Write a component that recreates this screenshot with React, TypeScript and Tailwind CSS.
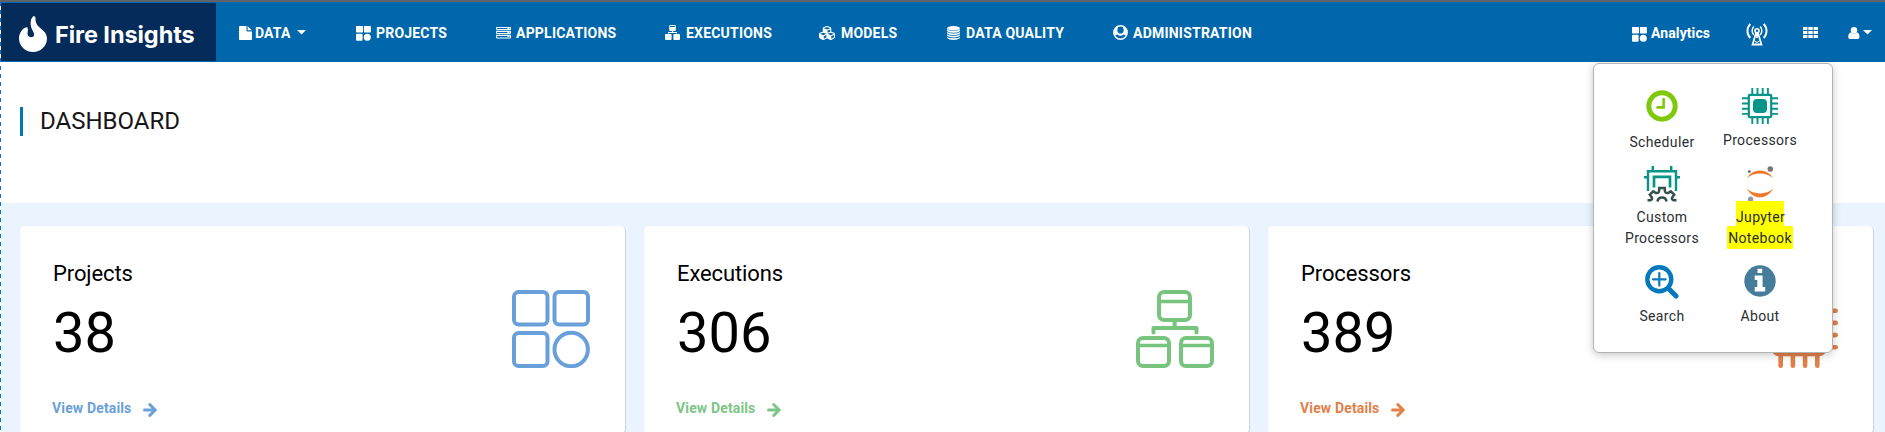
import type { ReactNode } from "react";
import { FaCubes } from "react-icons/fa";

function TilesSolid({ className }: { className: string }) {
  return (
    <svg viewBox="0 0 15 15" fill="currentColor" className={className}>
      <rect x="0" y="0" width="7" height="6.6" rx="0.8" />
      <rect x="7.9" y="0" width="7" height="6.6" rx="0.8" />
      <rect x="0" y="7.8" width="6.6" height="7" rx="1" />
      <circle cx="11.3" cy="11.2" r="3.5" />
    </svg>
  );
}

function FileIcon() {
  return (
    <svg viewBox="0 0 13 14" className="h-[14px] w-[13px]" fill="currentColor">
      <path d="M.9 0H7.5V4.6a.9.9 0 0 0 .9.9H13V13.1a.9.9 0 0 1-.9.9H.9A.9.9 0 0 1 0 13.100V.9A.9.9 0 0 1 .9 0Z" />
      <path d="M8.600 .1 12.800 4.300H8.600Z" />
    </svg>
  );
}

function ServerIcon() {
  return (
    <svg viewBox="0 0 15 12" className="h-[12px] w-[15px]">
      <g fill="none" stroke="currentColor" strokeWidth="1">
        <path d="M.5 .5H14.500V2.500H.5ZM.5 4.500H14.500V6.500H.5ZM.5 8.500H14.500V11H.5Z" />
        <path d="M0 3.500H15M0 7.500H15" opacity=".25" />
        <path d="M11.500 1.500h2M11.500 5.500h2M11.500 9.700h2" />
      </g>
    </svg>
  );
}

function HierarchySolid() {
  return (
    <svg viewBox="0 0 15 15" className="h-[15px] w-[15px]" fill="currentColor">
      <path d="M4.200 1a1 1 0 0 1 1-1h4.600a1 1 0 0 1 1 1v4a1 1 0 0 1-1 1H5.200a1 1 0 0 1-1-1ZM5 1.100v.8h5v-.8Z" fillRule="evenodd" />
      <path d="M7 6h1v1h4v1.500h-1V8H4v.5H3V7h4Z" />
      <path d="M0 10a1 1 0 0 1 1-1h4.600a1 1 0 0 1 1 1v4a1 1 0 0 1-1 1H1a1 1 0 0 1-1-1ZM8.400 10a1 1 0 0 1 1-1H14a1 1 0 0 1 1 1v4a1 1 0 0 1-1 1H9.400a1 1 0 0 1-1-1Z" />
    </svg>
  );
}

function DatabaseIcon() {
  return (
    <svg viewBox="0 0 13 14" className="h-[14px] w-[13px]" fill="currentColor">
      <ellipse cx="6.500" cy="2.200" rx="6.500" ry="2.200" />
      <path d="M0 3.300Q2 5 6.500 5T13 3.300V4.900Q11 6.800 6.500 6.800T0 4.900ZM0 6Q2 7.500 6.500 7.500T13 6V7.400Q11 9.200 6.500 9.200T0 7.400ZM0 8.500Q2 9.900 6.500 9.900T13 8.500V9.800Q11 11.600 6.500 11.600T0 9.800ZM0 10.900Q2 12.300 6.500 12.300T13 10.900V12Q11 14 6.500 14T0 12Z" />
    </svg>
  );
}

function AccountIcon() {
  return (
    <svg viewBox="0 0 15 15" className="h-[15px] w-[15px]">
      <circle cx="7.500" cy="7.500" r="6.700" fill="none" stroke="currentColor" strokeWidth="1.500" />
      <path fill="currentColor" d="M2.500 3.200 5 1.500 4.300 5.500Q4.500 8.600 7.500 8.600T10.700 5.500L10 1.500 12.500 3.200 14 7 13 10.800Q12.300 9.800 10.500 9.500Q9.500 10.800 7.500 10.800T4.500 9.500Q2.700 9.800 2 10.800L1 7Z" />
    </svg>
  );
}

function Caret() {
  return (
    <svg viewBox="0 0 9 5" className="h-[5px] w-[9px]" fill="currentColor">
      <path d="M0 0H9L4.500 4.500Z" />
    </svg>
  );
}

function NavItem({ width, icon, iconWidth, label, tracking }: { width: string; icon: ReactNode; iconWidth: string; label: string; tracking: string }) {
  return (
    <a className={"flex h-full shrink-0 items-center " + width}>
      <span className={"flex shrink-0 items-center " + iconWidth}>{icon}</span>
      <span className={"whitespace-nowrap " + tracking}>{label}</span>
    </a>
  );
}

function Navbar() {
  return (
    <header className="flex h-[60px] items-center bg-[#0067ac] text-sm font-bold leading-5 text-white">
      <div className="ml-px flex h-[58px] w-[215px] shrink-0 items-center bg-[#042b5a] pl-[18px]">
        <svg viewBox="0 0 28 36" className="mt-1 h-9 w-7" fill="#fff">
          <path d="M14.600 0C11.500 2.500 11.300 6.500 12 10.500C12.700 14 15.500 16.500 15.100 19.300C14.600 22 9.300 22 8.600 18.800C8.100 16 9.800 13.500 8.300 11.200C3.500 11.500 0 17 0 22.500C0 30 6.200 36 14 36C21.800 36 28 30 28 22.500C28 12.500 15.500 13 16.500 1.500Q16 .2 14.600 0Z" />
        </svg>
        <span className="ml-[8px] mt-[5px] whitespace-nowrap font-[Inter] text-[23.500px] font-bold leading-8 tracking-[-0.070px]">Fire Insights</span>
      </div>
      <nav className="flex h-full items-center pl-[23px] pt-px">
        <a className="flex w-[117px] shrink-0 items-center">
          <span className="w-[16px]"><FileIcon /></span>
          <span className="tracking-[0.15px]">DATA</span>
          <span className="mb-px ml-[7px]"><Caret /></span>
        </a>
        <NavItem width="w-[140px]" iconWidth="w-[20px]" icon={<TilesSolid className="mt-px h-[15px] w-[15px]" />} label="PROJECTS" tracking="tracking-[0.2px]" />
        <NavItem width="w-[169px]" iconWidth="w-[20px]" icon={<ServerIcon />} label="APPLICATIONS" tracking="tracking-[0.220px]" />
        <NavItem width="w-[153px]" iconWidth="w-[21px]" icon={<HierarchySolid />} label="EXECUTIONS" tracking="tracking-[0.2px]" />
        <NavItem width="w-[129px]" iconWidth="w-[23px]" icon={<FaCubes className="h-[16px] w-[18px]" />} label="MODELS" tracking="tracking-[0.2px]" />
        <NavItem width="w-[166px]" iconWidth="w-[19px]" icon={<DatabaseIcon />} label="DATA QUALITY" tracking="tracking-[0.220px]" />
        <NavItem width="w-[140px]" iconWidth="w-[20px]" icon={<AccountIcon />} label="ADMINISTRATION" tracking="tracking-[0.220px]" />
      </nav>
      <div className="ml-auto flex h-full items-center pr-[13px] pt-px">
        <TilesSolid className="mt-[3px] h-[15px] w-[15px]" />
        <span className="ml-1 w-[60px] whitespace-nowrap tracking-[0.1px]">Analytics</span>
        <svg viewBox="0 0 22 23" className="ml-[35px] mt-[3px] h-[23px] w-[22px]" fill="none" stroke="currentColor">
          <path d="M4.300 1A10 10 0 0 0 4.300 15M17.700 1A10 10 0 0 1 17.700 15" strokeWidth="1.900" />
          <path d="M7.800 3.500A6.500 6.500 0 0 0 7.800 12M14.200 3.500A6.500 6.500 0 0 1 14.200 12" strokeWidth="1.600" />
          <circle cx="11" cy="7.700" r="2" strokeWidth="1.600" />
          <path d="M10 10 6.500 21.700H15.500L12 10M11 10v5" strokeWidth="1.700" />
          <path d="M8 17.500 13.500 21M14 17.500 8.500 21" strokeWidth=".8" />
        </svg>
        <svg viewBox="0 0 15 11" className="ml-[35px] h-[11px] w-[15px]" fill="currentColor">
          <path d="M0 0H4.400V3H0ZM5.300 0H9.700V3H5.300ZM10.600 0H15V3H10.600ZM0 4H4.400V7H0ZM5.300 4H9.700V7H5.300ZM10.600 4H15V7H10.600ZM0 8H4.400V11H0ZM5.300 8H9.700V11H5.300ZM10.600 8H15V11H10.600Z" />
        </svg>
        <svg viewBox="0 0 12 12" className="ml-[30px] mt-px h-3 w-3" fill="currentColor">
          <ellipse cx="6" cy="3.200" rx="3.200" ry="3.200" />
          <path d="M3 5.300Q.2 6.200 .2 10Q.2 12 2 12H9.700Q11.500 12 11.500 10Q11.500 6.200 9 5.300Q6 7.800 3 5.300Z" />
        </svg>
        <span className="mb-px ml-[3px]"><Caret /></span>
      </div>
    </header>
  );
}

function ProjectsIcon() {
  return (
    <svg viewBox="0 0 78 78" className="h-[78px] w-[78px]" fill="none" stroke="#6aa0da" strokeWidth="4">
      <rect x="2" y="2" width="33.500" height="32.500" rx="4.500" />
      <rect x="42.500" y="2" width="33.500" height="32.500" rx="4.500" />
      <rect x="2" y="43" width="33.500" height="33" rx="4.500" />
      <circle cx="59.200" cy="59.500" r="16.700" />
    </svg>
  );
}

function ExecutionsIcon() {
  return (
    <svg viewBox="0 0 78 78" className="h-[78px] w-[78px]" fill="none" stroke="#78c47f" strokeWidth="4">
      <rect x="23" y="2" width="31" height="28" rx="5" />
      <rect x="2" y="48" width="31" height="28" rx="5" />
      <rect x="45" y="48" width="31" height="28" rx="5" />
      <path d="M23 11.500H54M2 55.500H33M45 55.500H76" strokeWidth="3.300" />
      <path d="M38.700 31V37.500" />
      <path d="M17.500 42.500V38H60.500V42.500" strokeLinecap="round" strokeLinejoin="round" />
    </svg>
  );
}

function ProcessorsIcon() {
  return (
    <svg viewBox="0 0 78 78" className="h-[78px] w-[78px]" fill="none" stroke="#e28048" strokeWidth="4.600">
      <rect x="14" y="14" width="50" height="50" rx="5" />
      <rect x="27" y="27" width="24" height="24" rx="3" />
      <path strokeLinecap="round" d="M20.700 2.300V14M32.900 2.300V14M45.100 2.300V14M57.300 2.300V14M20.700 64V75.700M32.900 64V75.700M45.100 64V75.700M57.300 64V75.700M2.300 20.700H14M2.300 32.900H14M2.300 45.100H14M2.300 57.300H14M64 20.700H75.700M64 32.900H75.700M64 45.100H75.700M64 57.300H75.700" />
    </svg>
  );
}

function StatCard({ title, value, color, icon }: { title: string; value: string; color: string; icon: ReactNode }) {
  return (
    <section className="flex h-[208px] justify-between rounded-[5px] bg-white pl-[32px] pr-[35px] shadow-[1px_1px_1px_rgba(0,0,0,0.14)]">
      <div className="flex flex-col">
        <h2 className="mt-[35px] pl-px text-[22px] font-normal leading-[26px] tracking-[-0.1px] text-black">{title}</h2>
        <p className="mt-[14px] pl-px text-[56px] leading-[64px] text-black">{value}</p>
        <a className={"mt-[33px] flex items-center text-sm font-bold leading-5 tracking-[0.15px] " + color}>
          <span>View Details</span>
          <svg viewBox="0 0 14 14" className="ml-[12px] mt-[3px] h-[14px] w-[14px]" fill="none" stroke="currentColor">
            <path d="M1.500 7H11" strokeWidth="3" strokeLinecap="round" />
            <path d="M6.800 1.600 12.200 7 6.800 12.400" strokeWidth="2.900" strokeLinecap="round" />
          </svg>
        </a>
      </div>
      <div className="mt-16">{icon}</div>
    </section>
  );
}

function ChipIcon() {
  return (
    <svg viewBox="0 0 36 36" className="h-9 w-9 shrink-0" fill="none" stroke="#079489">
      <rect x="6.800" y="6.800" width="22.400" height="22.400" rx="1" strokeWidth="2.200" />
      <rect x="11" y="11" width="14" height="14" rx="4" fill="#079489" stroke="none" />
      <path strokeWidth="1.900" d="M10.300 0V6M15.500 0V6M20.700 0V6M25.900 0V6M10.300 30V36M15.500 30V36M20.700 30V36M25.900 30V36M0 10.300H6M0 15.500H6M0 20.700H6M0 25.900H6M30 10.300H36M30 15.500H36M30 20.700H36M30 25.900H36" />
    </svg>
  );
}

function CustomChipIcon() {
  return (
    <svg viewBox="0 0 36 36" className="h-9 w-9 shrink-0" fill="none" stroke="#079489" strokeWidth="2.400">
      <path d="M4 25V5.200H32V25M0 11.300H4M32 11.300H36M8.800 0V5M27.200 0V5" />
      <path d="M10 21.500V10.800H26V21.500" strokeWidth="2.700" />
      <path stroke="#34504f" strokeWidth="2.500" d="M3.500 34.200H6.500Q9 33 7.500 31L5.800 28.700L9.200 25.400L12 27Q15 27.500 15.200 24.500V22H20.800V24.500Q21 27.500 24 27L26.800 25.400L30.200 28.700L28.500 31Q27 33 29.500 34.200H32.500M13.500 35.500Q14 31.500 18 31.500T22.500 35.500" />
    </svg>
  );
}

function JupyterIcon() {
  return (
    <svg viewBox="0 0 26 36" className="h-9 w-[26px] shrink-0" fill="#f37726">
      <path d="M0 12.500C5 1.800 21 1.800 26 12.500C20 5.800 6 5.800 0 12.500Z" />
      <path d="M0 22.500C6 29 20 29 26 22.500C21 34.200 5 34.200 0 22.500Z" />
      <circle cx="23.300" cy="3" r="2.800" fill="#767677" />
      <circle cx="2.300" cy="5.600" r="1.500" fill="#767677" />
      <circle cx="3.600" cy="33.200" r="2.600" fill="#989899" />
    </svg>
  );
}

function InfoIcon() {
  return (
    <svg viewBox="0 0 32 32" className="h-8 w-8 shrink-0">
      <circle cx="16" cy="16" r="15.700" fill="#447c99" />
      <path fill="#fff" d="M13.500 3.700H18.200V8H13.500ZM10.700 10.500H18.600V22H21.200V26.500H10.700V22H13.300V15H10.700Z" />
    </svg>
  );
}

function AppTile({ icon, children, className }: { icon: ReactNode; children: ReactNode; className: string }) {
  return (
    <a className={"flex w-[98px] flex-col items-center text-center text-sm font-normal leading-[21px] tracking-[0.35px] text-[#2a2e32] " + className}>
      {icon}
      {children}
    </a>
  );
}

function AppsMenu() {
  return (
    <div className="absolute left-[1593px] top-[63px] grid h-[290px] w-[240px] grid-cols-[98px_98px] grid-rows-[78px_98px_98px] rounded-[6px] border border-[#b4b4b4] bg-white pl-[19px] shadow-[0_2px_8px_rgba(0,0,0,0.22)]">
      <AppTile className="pt-[26px]" icon={
        <svg viewBox="0 0 32 32" className="h-8 w-8 shrink-0" fill="none" stroke="#7fc80c">
          <circle cx="16" cy="16" r="13.200" strokeWidth="5" />
          <path d="M17.600 9V17.400H11.500" strokeWidth="2.600" strokeLinecap="round" />
        </svg>
      }>
        <span className="mt-[10px]">Scheduler</span>
      </AppTile>
      <AppTile className="pt-[24px]" icon={<ChipIcon />}>
        <span className="mt-[6px]">Processors</span>
      </AppTile>
      <AppTile className="pt-[24px]" icon={<CustomChipIcon />}>
        <span className="mt-[5px]">Custom</span>
        <span>Processors</span>
      </AppTile>
      <AppTile className="pt-[24px]" icon={<JupyterIcon />}>
        <span className="mt-[-1px] h-[25px] w-[48px] bg-[#ffff00] pt-[6px]">Jupyter</span>
        <span className="h-[26px] w-[66px] bg-[#ffff00] pt-[2px]">Notebook</span>
      </AppTile>
      <AppTile className="pt-[25px]" icon={
        <svg viewBox="0 0 34 34" className="h-[34px] w-[34px] shrink-0" fill="none" stroke="#0679bd">
          <circle cx="14.300" cy="14.300" r="12" strokeWidth="4.400" />
          <path d="M14.300 8V20.600M8 14.300H20.600" strokeWidth="2.200" strokeLinecap="round" />
          <path d="M23.500 23.500 31 31" strokeWidth="5" strokeLinecap="round" />
        </svg>
      }>
        <span className="mt-[7px]">Search</span>
      </AppTile>
      <AppTile className="pt-[25px]" icon={<InfoIcon />}>
        <span className="mt-[9px]">About</span>
      </AppTile>
    </div>
  );
}

export default function App() {
  return (
    <div className="relative h-[432px] w-[1885px] overflow-hidden bg-white font-[Roboto,sans-serif]">
      <div className="h-[2px] bg-[#5f6368]" />
      <Navbar />
      <div className="flex h-[141px] pl-5 pt-[45px]">
        <div className="h-[29px] w-[3px] bg-[#0077b6]" />
        <h1 className="ml-[17px] text-2xl font-normal leading-[28px] text-[#161616]">DASHBOARD</h1>
      </div>
      <main className="grid h-[231px] grid-cols-[605px_605px_605px] gap-[19px] bg-[#e9f4ff] pl-[20px] pt-[23px]">
        <StatCard title="Projects" value="38" color="text-[#6aa0da]" icon={<ProjectsIcon />} />
        <StatCard title="Executions" value="306" color="text-[#7cc687]" icon={<ExecutionsIcon />} />
        <StatCard title="Processors" value="389" color="text-[#e28048]" icon={<ProcessorsIcon />} />
      </main>
      <div className="absolute left-0 top-[2px] h-[430px] w-px bg-[repeating-linear-gradient(to_bottom,#0078d7_0px,#0078d7_4px,#ffffff_4px,#ffffff_8px)]" />
      <AppsMenu />
    </div>
  );
}
